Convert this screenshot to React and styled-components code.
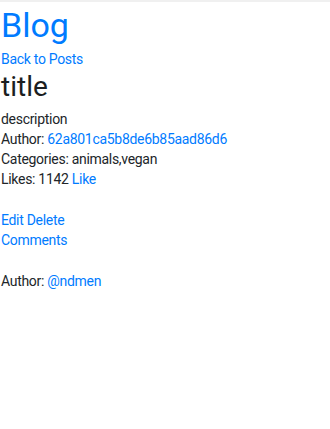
import React from 'react'
import styled, { createGlobalStyle } from 'styled-components'

const Global = createGlobalStyle`
body {
    margin: 0;
    background: #fff;
    font-family: Roboto, "Noto Sans", sans-serif;
    color: #212529;
}
`

const TopBar = styled.div`
height: 2px;
background-color: #f0f0f0;
`

const Page = styled.div`
display: flex;
flex-direction: column;
padding: 0 1px;
`

const Brand = styled.a`
display: block;
font-size: 34px;
line-height: 47px;
color: #007bff;
text-decoration: none;
`

const Link = styled.a`
color: #007bff;
text-decoration: none;
`

const Title = styled.h2`
margin: 0 0 5px;
font-size: 28px;
font-weight: 400;
line-height: 35px;
color: #1b1e21;
`

const Line = styled.div`
font-size: 14px;
line-height: 20px;
letter-spacing: -0.3px;
min-height: ${props => props.gap ? '21px' : '20px'};
`

const Post = () => {
    const post = {
        title: 'title',
        description: 'description',
        author: '62a801ca5b8de6b85aad86d6',
        categories: ['animals', 'vegan'],
        likes: 1142
    }
    return (
        <>
            <Title>{post.title}</Title>
            <Line>{post.description}</Line>
            <Line>Author: <Link href="#">{post.author}</Link></Line>
            <Line>Categories: {post.categories.join(',')}</Line>
            <Line>Likes: {post.likes} <Link href="#">Like</Link></Line>
            <Line gap />
            <Line><Link href="#">Edit</Link> <Link href="#">Delete</Link></Line>
            <Line><Link href="#">Comments</Link></Line>
            <Line gap />
            <Line>Author: <Link href="#">@ndmen</Link></Line>
        </>
    )
}

export default function App() {
    return (
        <>
            <Global />
            <TopBar />
            <Page>
                <Brand href="#">Blog</Brand>
                <Line><Link href="#">Back to Posts</Link></Line>
                <Post />
            </Page>
        </>
    )
}
